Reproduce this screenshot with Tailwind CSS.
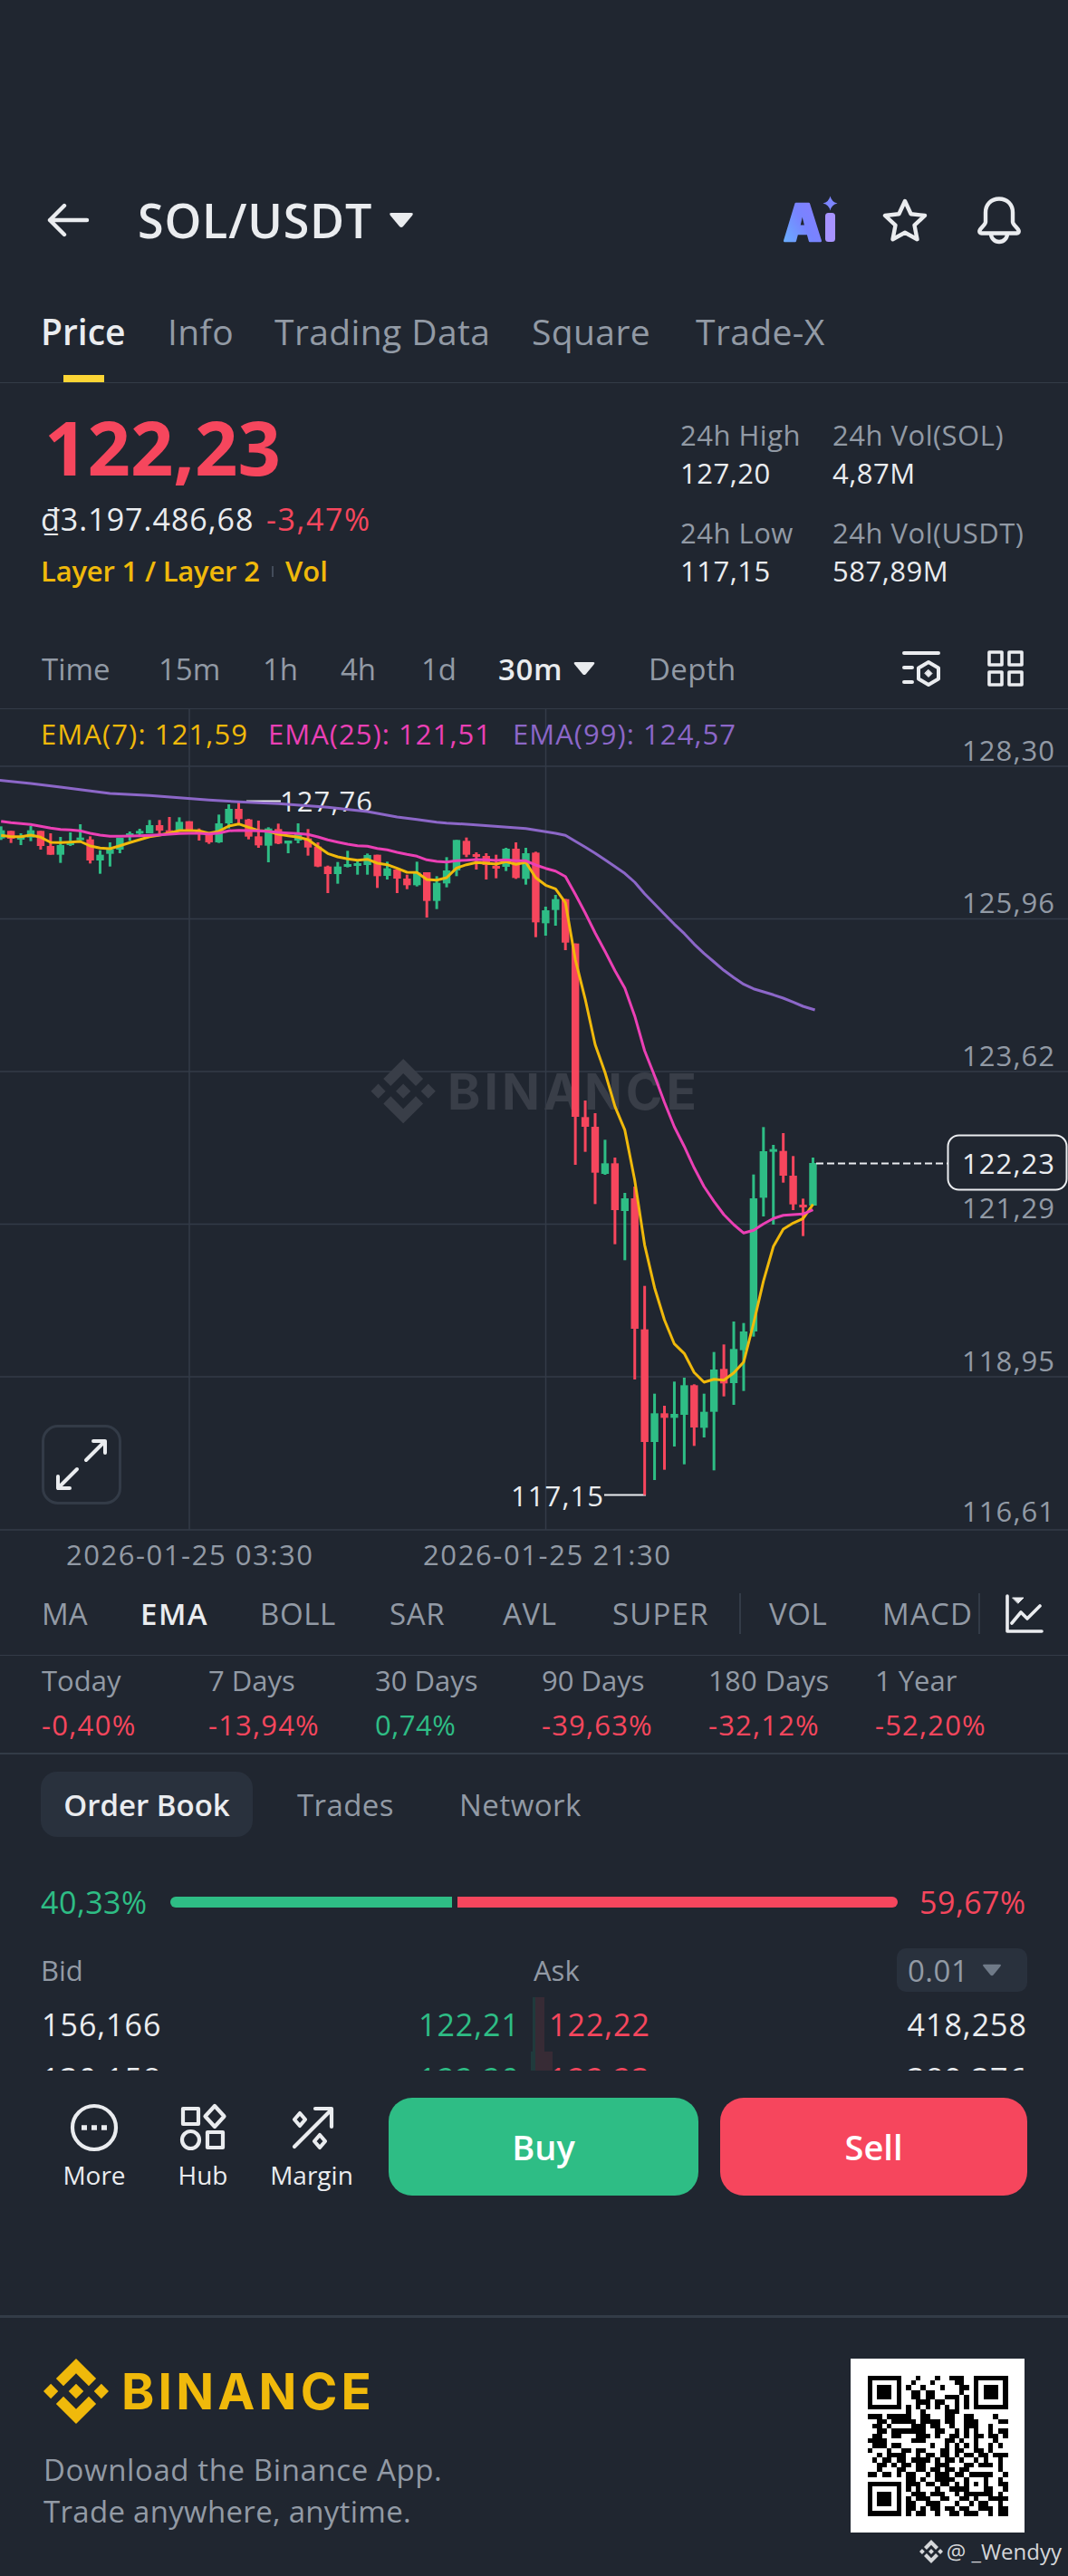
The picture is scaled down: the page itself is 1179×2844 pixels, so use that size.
<!DOCTYPE html>
<html lang="en">
<head>
    <meta charset="UTF-8">
    <meta name="viewport" content="width=device-width, initial-scale=1.0">
    <title>SOL/USDT</title>
    <script src="https://cdn.jsdelivr.net/npm/@tailwindcss/browser@4"></script>
</head>
<body class="bg-[#202630] text-[#eaecef] font-['Open_Sans','Noto_Sans',sans-serif] w-[1179px] h-[2844px] overflow-hidden whitespace-nowrap leading-none">

    <!-- Header -->
    <header class="mt-[188px] h-[110px] flex items-center pl-[51px] pr-[48px]">
        <svg class="w-[48px] h-[42px]" viewBox="0 0 48 42" fill="none" stroke="#eaecef" stroke-width="4.4" stroke-linecap="round" stroke-linejoin="round"><path d="M20 5L4 21l16 16M4 21h41"/></svg>
        <h1 class="ml-[53px] w-[277px] text-[52px] font-semibold tracking-[0.8px]">SOL/USDT</h1>
        <svg class="w-[28px] h-[18px]" viewBox="0 0 28 18" fill="#eaecef"><path d="M3 1h22q3 0 1 3L16 16q-2 2-4 0L2 4Q0 1 3 1z"/></svg>
        <svg class="ml-auto w-[64px] h-[56px] overflow-visible" viewBox="0 0 64 56">
            <defs>
                <linearGradient id="ai" x1="0" y1="1" x2="1" y2="0"><stop offset="0" stop-color="#66b8ff"/><stop offset=".5" stop-color="#7784ff"/><stop offset="1" stop-color="#8a7cff"/></linearGradient>
            </defs>
            <text x="2" y="51" font-family="Inter" font-weight="900" font-size="56" textLength="42" lengthAdjust="spacingAndGlyphs" fill="url(#ai)" stroke="url(#ai)" stroke-width="2.5" stroke-linejoin="round">A</text>
            <rect x="48" y="20" width="11" height="32" rx="3.5" fill="#a793ff"/>
            <path d="M53.500 1.500q1.500 6.500 8 8q-6.500 1.500-8 8q-1.500-6.500-8-8q6.500-1.500 8-8z" fill="#7d86ff"/>
        </svg>
        <svg class="ml-[44px] w-[56px] h-[56px]" viewBox="0 0 56 56" fill="none" stroke="#eaecef" stroke-width="4.4" stroke-linejoin="round"><path d="M28 7l6.600 14.200 15.400 1.800-11.500 10.700 3 15.500L28 41.800l-13.500 7.400 3-15.500L6 23l15.400-1.800z"/></svg>
        <svg class="ml-[48px] w-[56px] h-[56px]" viewBox="0 0 56 56" fill="none" stroke="#eaecef" stroke-width="4.400" stroke-linejoin="round"><path d="M28 4.500c-9 0-15 6.500-15 15V30c0 3-5.500 6.500-6.500 9.500-.6 2 .4 3 2 3h39c1.600 0 2.600-1 2-3C48.500 36.500 43 33 43 30V19.500c0-8.500-6-15-15-15z"/><path d="M19 43c0 5 4 9 9 9s9-4 9-9"/></svg>
    </header>

    <!-- Tabs -->
    <nav class="h-[125px] border-b border-[#333b47] flex pl-[45px] pt-[48px] text-[39px] font-medium tracking-[0.4px] text-[#929aa5]">
        <div class="w-[140px] relative text-[#eaecef] font-semibold tracking-normal">Price<span class="absolute left-[25px] top-[68px] w-[45px] h-[8px] bg-[#fcd535]"></span></div>
        <div class="w-[118px]">Info</div>
        <div class="w-[284px]">Trading Data</div>
        <div class="w-[181px]">Square</div>
        <div>Trade-X</div>
    </nav>

    <!-- Price summary -->
    <section class="h-[267px] flex justify-between pl-[45px]">
        <div class="pt-[28px]">
            <div class="pl-[4px] text-[83px] font-bold text-[#f6465d]">122,23</div>
            <div class="mt-[22px] text-[34px] font-medium tracking-[1px] flex"><span class="w-[249px]">₫3.197.486,68</span><span class="text-[#f6465d] tracking-[1.6px]">-3,47%</span></div>
            <div class="mt-[25px] text-[31px] font-semibold text-[#f0b90b] flex items-center"><span class="w-[255px] tracking-[-0.2px]">Layer 1 / Layer 2</span><span class="w-[2px] h-[12px] bg-[#434c5a] mr-[13px]"></span><span>Vol</span></div>
        </div>
        <div class="w-[428px] pt-[42px] grid grid-cols-[168px_1fr] auto-rows-min text-[31px] tracking-[0.5px]">
            <div class="h-[42px] text-[#929aa5]">24h High</div><div class="h-[42px] text-[#929aa5]">24h Vol(SOL)</div>
            <div class="h-[66px]">127,20</div><div class="h-[66px]">4,87M</div>
            <div class="h-[42px] text-[#929aa5]">24h Low</div><div class="h-[42px] text-[#929aa5]">24h Vol(USDT)</div>
            <div>117,15</div><div>587,89M</div>
        </div>
    </section>

    <!-- Intervals -->
    <nav class="h-[90px] flex items-center pl-[46px] pt-[6px] text-[33px] text-[#929aa5]">
        <div class="w-[129px]">Time</div>
        <div class="w-[115px]">15m</div>
        <div class="w-[86px]">1h</div>
        <div class="w-[89px]">4h</div>
        <div class="w-[85px]">1d</div>
        <div class="w-[82px] font-semibold text-[#eaecef] tracking-[0.6px]">30m</div>
        <svg class="w-[26px] h-[16px]" viewBox="0 0 28 18" fill="#eaecef"><path d="M3 1h22q3 0 1 3L16 16q-2 2-4 0L2 4Q0 1 3 1z"/></svg>
        <div class="ml-[58px] w-[278px] tracking-[0.4px]">Depth</div>
        <svg class="w-[46px] h-[42px]" viewBox="0 0 46 42" fill="none" stroke="#eaecef" stroke-width="4" stroke-linecap="round" stroke-linejoin="round"><path d="M4 4h38M4 20h9M4 36h9M31 14l11 6.500v12L31 39l-11-6.500v-12z"/><path d="M31 22.500l4 4-4 4-4-4z" fill="#eaecef" stroke-width="1"/></svg>
        <svg class="ml-[48px] w-[44px] h-[44px]" viewBox="0 0 44 44" fill="none" stroke="#eaecef" stroke-width="3.600" stroke-linejoin="round"><path d="M4 4h14v14H4zM26 4h14v14H26zM4 26h14v14H4zM26 26h14v14H26z"/></svg>
    </nav>

    <!-- Chart: the svg starts at the top border and shares its pixel grid with the page -->
    <section class="relative h-[964px]">
        <svg id="chart" class="absolute left-0 top-0" width="1179" height="964" viewBox="0 0 1179 964" font-family="Open Sans, Noto Sans, sans-serif" font-size="31">
            <g id="grid" stroke="#333b47"></g>
            <g fill="#393e48">
                <g transform="translate(409.500 389) scale(.5635)"><path d="M38.700 53.200 63.300 28.600 87.900 53.200 102.200 38.900 63.300 0 24.400 38.900zM0 63.300 14.300 49 28.600 63.300 14.300 77.600zM38.700 73.400 63.300 98 87.900 73.400 102.200 87.700 63.300 126.600 24.400 87.700zM98 63.300 112.300 49 126.600 63.300 112.300 77.600zM77.800 63.300 63.300 48.800 48.800 63.300 63.300 77.800z"/></g>
                <text x="494" y="444.500" font-family="Inter" font-weight="700" font-size="55" textLength="275">BINANCE</text>
            </g>
            <g fill="#eaecef"><text x="309" y="116" textLength="102">127,76</text><text x="564" y="883" textLength="102">117,15</text></g>
            <path d="M272 104.500h38M667 870.500h46" stroke="#eaecef" stroke-width="2"/>
            <g id="candles"></g>
            <g id="lines" fill="none" stroke-width="3" stroke-linejoin="round"></g>
            <path d="M901 504.500h145" stroke="#eaecef" stroke-width="2" stroke-dasharray="8 4"/>
            <text x="45" y="42" fill="#f0b90b" textLength="228">EMA(7): 121,59</text>
            <text x="296" y="42" fill="#eb40b5" textLength="246">EMA(25): 121,51</text>
            <text x="566" y="42" fill="#8c67c8" textLength="246">EMA(99): 124,57</text>
            <g id="axis" fill="#929aa5"></g>
            <rect x="1046.500" y="473.500" width="131" height="60" rx="12" fill="#202630" stroke="#eaecef" stroke-width="2"/>
            <text x="1062" y="516" fill="#eaecef" font-weight="500" textLength="102">122,23</text>
            <g fill="#929aa5"><text x="73" y="948" textLength="272">2026-01-25 03:30</text><text x="467" y="948" textLength="273">2026-01-25 21:30</text></g>
        </svg>
        <div class="absolute left-[46px] top-[793px] w-[88px] h-[88px] rounded-[18px] border-3 border-[#333b47] flex items-center justify-center">
            <svg class="w-[60px] h-[60px]" viewBox="0 0 60 60" fill="none" stroke="#eaecef" stroke-width="4" stroke-linecap="round" stroke-linejoin="round"><path d="M35 25L56 4M43 4h13v13M25 35L4 56M4 43v13h13"/></svg>
        </div>
    </section>

    <!-- Indicators -->
    <nav class="h-[84px] border-b border-[#333b47] flex items-center pl-[46px] pb-[8px] text-[33px] tracking-[0.6px] text-[#929aa5]">
        <div class="w-[109px] tracking-normal">MA</div>
        <div class="w-[132px] font-semibold text-[#eaecef] tracking-[1.5px]">EMA</div>
        <div class="w-[143px]">BOLL</div>
        <div class="w-[125px]">SAR</div>
        <div class="w-[121px]">AVL</div>
        <div class="w-[140px] tracking-[1.2px]">SUPER</div>
        <div class="w-[2px] h-[45px] bg-[#333b47]"></div>
        <div class="ml-[31px] w-[125px]">VOL</div>
        <div class="w-[106px] tracking-[1.2px]">MACD</div>
        <div class="w-[2px] h-[45px] bg-[#333b47]"></div>
        <svg class="ml-[27px] w-[44px] h-[44px]" viewBox="0 0 44 44" fill="none" stroke="#eaecef" stroke-width="3.600" stroke-linecap="round" stroke-linejoin="round"><path d="M3 2v39h38M8 32l10-12 7 7L39 13"/><path d="M9 4h12l-6 6z" fill="#eaecef" stroke-width="1"/></svg>
    </nav>

    <!-- Performance -->
    <section class="h-[109px] border-b-2 border-[#333b47] pl-[46px] pt-[12px] grid grid-cols-[184px_184px_184px_184px_184px_1fr] auto-rows-min text-[31px] text-[#929aa5]">
        <div class="h-[49px]">Today</div><div>7 Days</div><div>30 Days</div><div>90 Days</div><div class="tracking-[0.3px]">180 Days</div><div>1 Year</div>
        <div class="text-[#f6465d] tracking-[1.3px]">-0,40%</div><div class="text-[#f6465d] tracking-[1.2px]">-13,94%</div><div class="text-[#2ebd85] tracking-[0.5px]">0,74%</div><div class="text-[#f6465d] tracking-[1.2px]">-39,63%</div><div class="text-[#f6465d] tracking-[1.2px]">-32,12%</div><div class="text-[#f6465d] tracking-[1.2px]">-52,20%</div>
    </section>

    <!-- Order book -->
    <nav class="mt-[19px] h-[72px] flex items-center pl-[45px] text-[33px] font-medium text-[#929aa5]">
        <div class="w-[234px] h-[72px] rounded-[18px] bg-[#29313d] text-[#eaecef] font-semibold flex items-center justify-center">Order Book</div>
        <div class="ml-[49px] w-[179px] tracking-[0.4px]">Trades</div>
        <div class="tracking-[0.5px]">Network</div>
    </nav>
    <div class="mt-[50px] h-[44px] flex items-center pl-[45px] text-[34px] tracking-[0.5px]">
        <span class="w-[143px] text-[#2ebd85]">40,33%</span>
        <span class="w-[311px] h-[12px] rounded-l-full bg-[#2ebd85]"></span>
        <span class="ml-[6px] w-[486px] h-[12px] rounded-r-full bg-[#f6465d]"></span>
        <span class="ml-[24px] text-[#f6465d]">59,67%</span>
    </div>
    <div class="mt-[29px] h-[48px] flex items-center pl-[45px] text-[31px] text-[#929aa5]">
        <span class="w-[544px]">Bid</span><span class="w-[401px]">Ask</span>
        <span class="w-[144px] h-[48px] rounded-[10px] bg-[#29313d] flex items-center pl-[12px] text-[33px] tracking-[0.5px]">0.01
            <svg class="ml-[15px] w-[22px] h-[14px]" viewBox="0 0 28 18" fill="#6f7a88"><path d="M3 1h22q3 0 1 3L16 16q-2 2-4 0L2 4Q0 1 3 1z"/></svg>
        </span>
    </div>
    <div class="mt-[6px] h-[81px] overflow-hidden text-[34px] tracking-[1px]">
        <div class="h-[60px] flex items-center pb-[1px]">
            <span class="w-[240px] pl-[46px]">156,166</span>
            <span class="w-[334px] text-right text-[#2ebd85]">122,21</span>
            <span class="ml-[14px] w-[3px] h-[60px] bg-[#203a3c]"></span><span class="w-[10px] h-[60px] bg-[#372b35]"></span>
            <span class="ml-[5px] text-[#f6465d]">122,22</span>
            <span class="ml-auto pr-[45px]">418,258</span>
        </div>
        <div class="h-[60px] flex items-center pb-[1px]">
            <span class="w-[240px] pl-[46px]">130,158</span>
            <span class="w-[334px] text-right text-[#2ebd85]">122,20</span>
            <span class="ml-[12px] w-[5px] h-[60px] bg-[#203a3c]"></span><span class="w-[19px] h-[60px] bg-[#372b35]"></span>
            <span class="-ml-[4px] text-[#f6465d]">122,23</span>
            <span class="ml-auto pr-[45px]">389,376</span>
        </div>
    </div>

    <!-- Trade bar -->
    <section class="mt-[30px] h-[108px] flex items-center pl-[54px] text-[28px] text-center">
        <div class="w-[100px] flex flex-col items-center gap-[10px] pb-[5px]">
            <svg class="w-[56px] h-[56px]" viewBox="0 0 56 56" fill="none" stroke="#eaecef" stroke-width="4.200"><circle cx="28" cy="28" r="24"/><path d="M14 28h6M25 28h6M36 28h6" stroke-width="5.500"/></svg>
            <span>More</span>
        </div>
        <div class="ml-[20px] w-[100px] flex flex-col items-center gap-[10px] pb-[5px]">
            <svg class="w-[56px] h-[56px]" viewBox="0 0 56 56" fill="none" stroke="#eaecef" stroke-width="4.200" stroke-linejoin="round"><path d="M6 7h17v17H6zM41 4l10.500 11.500L41 27 30.500 15.500zM33 33h17v17H33z"/><circle cx="14.500" cy="41.500" r="9.500"/></svg>
            <span>Hub</span>
        </div>
        <div class="ml-[20px] w-[100px] flex flex-col items-center gap-[10px] pb-[5px]">
            <svg class="w-[56px] h-[56px]" viewBox="0 0 56 56" fill="none" stroke="#eaecef" stroke-width="4.200" stroke-linejoin="round" stroke-linecap="round"><path d="M9 49L49 9M32 7h18v20"/><path d="M15 12l6 7-6 7-6-7zM37 36l6 7-6 7-6-7z"/></svg>
            <span>Margin</span>
        </div>
        <button class="ml-[35px] w-[342px] h-[108px] rounded-[26px] bg-[#2ebd85] text-white text-[38px] font-semibold">Buy</button>
        <button class="ml-[24px] w-[339px] h-[108px] rounded-[26px] bg-[#f6465d] text-white text-[38px] font-semibold">Sell</button>
    </section>

    <!-- Share footer -->
    <footer class="relative mt-[132px] h-[288px] border-t-3 border-[#333b47] flex justify-between pl-[48px] pr-[48px] pt-[45px]">
        <div class="text-[#f0b90b]">
            <div class="h-[72px] flex items-center">
                <svg class="w-[72px] h-[72px]" viewBox="0 0 126.600 126.600" fill="#f0b90b"><path d="M38.700 53.200 63.300 28.600 87.900 53.200 102.200 38.900 63.300 0 24.400 38.900zM0 63.300 14.300 49 28.600 63.300 14.300 77.600zM38.700 73.400 63.300 98 87.900 73.400 102.200 87.700 63.300 126.600 24.400 87.700zM98 63.300 112.300 49 126.600 63.300 112.300 77.600zM77.800 63.300 63.300 48.800 48.800 63.300 63.300 77.800z"/></svg>
                <svg class="w-[296px] h-[72px]" viewBox="0 0 296 72" fill="#f0b90b"><text x="14" y="56" font-family="Inter" font-weight="700" font-size="55" textLength="276">BINANCE</text></svg>
            </div>
            <p class="mt-[28px] text-[33px] leading-[46px] text-[#929aa5] tracking-[0.6px]">Download the Binance App.<br><span class="tracking-[0.3px]">Trade anywhere, anytime.</span></p>
        </div>
        <svg id="qr" class="w-[192px] h-[192px] bg-white" viewBox="0 0 192 192" shape-rendering="crispEdges"></svg>
        <div class="absolute right-[7px] bottom-[14px] flex items-center text-[24px] text-[#d5d7da]">
            <svg class="w-[26px] h-[26px] mr-[4px]" viewBox="0 0 126.600 126.600" fill="#d5d7da"><path d="M38.700 53.200 63.300 28.600 87.900 53.200 102.200 38.900 63.300 0 24.400 38.900zM0 63.300 14.300 49 28.600 63.300 14.300 77.600zM38.700 73.400 63.300 98 87.900 73.400 102.200 87.700 63.300 126.600 24.400 87.700zM98 63.300 112.300 49 126.600 63.300 112.300 77.600zM77.800 63.300 63.300 48.800 48.800 63.300 63.300 77.800z"/></svg>
            @ _Wendyy
        </div>
    </footer>

    <script>
        const STEP = 10.93, X0 = 1.2;
        const x = i => X0 + i * STEP;

        // g = up, r = down; high, body top, body bottom, low (in thirds of a pixel)
        const candles = `g397,410,437,442 r412,412,438,452 g420,432,440,459 g396,410,434,446 r412,412,462,474 r420,462,491,491 g432,459,491,518 g417,450,459,462 g390,434,443,443 r430,440,510,520
            g476,491,510,554 g450,474,488,530 g435,435,474,486 g414,420,428,445 g405,412,420,430 g376,393,420,420 r376,393,411,422 r366,410,420,424 g367,382,410,415 r380,380,410,412
            r404,412,418,444 r416,420,450,455 g358,387,450,452 g324,339,387,404 r318,339,373,392 r372,374,431,440 r378,430,460,468 g400,404,461,516 r388,406,454,456 g444,444,454,486
            g387,420,444,453 r406,437,467,494 r450,464,530,532 r527,530,555,618 g515,530,555,587 g478,522,531,533 g510,519,528,557 g487,492,525,557 r491,491,562,601 g514,536,561,573
            r540,540,570,618 r557,570,592,605 g514,550,592,596 r549,549,644,699 g562,584,644,671 g499,543,586,599 g442,442,543,562 r434,445,491,499 r483,489,498,540 r486,495,525,573
            r491,528,537,569 g468,471,531,545 r450,471,568,571 g468,486,571,590 r481,484,715,764 g663,675,718,759 g624,638,674,726 r637,638,782,807 r785,785,1359,1518 r1305,1360,1392,1475
            r1347,1392,1544,1648 g1435,1513,1548,1551 r1494,1513,1668,1781 g1611,1629,1671,1834 r1590,1629,2061,2229 r1919,2063,2436,2612 g2276,2341,2436,2562 r2316,2341,2356,2528 g2236,2343,2356,2451 g2223,2248,2346,2510
            r2245,2248,2388,2449 g2276,2336,2389,2421 g2138,2196,2336,2530 r2113,2194,2242,2285 g2037,2128,2241,2313 g2042,2070,2132,2267 g1550,1629,2070,2087 g1393,1473,1627,1689 g1452,1466,1474,1716 r1413,1472,1554,1577
            r1489,1554,1649,1668 r1630,1650,1659,1754 g1494,1512,1653,1653`.split(/\s+/);

        document.getElementById('candles').innerHTML = candles.map((c, i) => {
            const color = c[0] === 'g' ? '#2ebd85' : '#f6465d';
            const [h, t, b, l] = c.slice(1).split(',').map(v => v / 3);
            return `<rect x="${x(i) - 1.5}" y="${h}" width="3" height="${l - h}" fill="${color}"/><rect x="${x(i) - 4.2}" y="${t}" width="8.4" height="${Math.max(b - t, 3)}" fill="${color}"/>`;
        }).join('');

        // EMA lines, same units
        const ema7 = [427,431,431,426,433,450,451,449,447,462,469,471,461,451,441,431,426,419,411,411,412,420,413,396,389,400,411,413,423,428,433,441,464,487,498,505,509,506,519,524,536,549,550,573,575,567,535,524,517,519,522,514,523,516,567,592,604,650,838,970,1120,1212,1325,1403,1569,1783,1925,2032,2111,2143,2206,2238,2228,2231,2207,2171,2043,1903,1789,1731,1711,1696,1649];
        const ema25 = [380,385,388,391,397,403,407,409,412,420,426,430,430,429,428,427,425,423,421,420,420,422,419,412,410,411,412,414,417,419,421,424,432,442,449,456,461,463,470,475,483,490,496,508,513,515,511,509,507,508,510,508,511,511,525,536,545,563,622,684,750,811,875,933,1025,1140,1223,1311,1392,1457,1528,1590,1639,1683,1716,1744,1735,1714,1696,1685,1683,1681,1667];
        const ema99 = [[-0.2,244],[3,255],[6,267],[11,288],[15,295],[21,310],[24,316],[28,322],[33,334],[37,348],[40,366],[42,374],[44,383],[45,386],[48,392],[53,404],[55,415],[56,420],[57,427],[58,446],[59,466],[60,486],[61,508],[62,530],[63,553],[64,582],[65,620],[66,654],[67,688],[68,721],[69,752],[70,787],[71,818],[72,846],[73,874],[74,898],[75,920],[76,935],[77,945],[78,955],[79,966],[80,979],[81,993],[82.2,1005]];
        const line = (pts, color) => `<polyline stroke="${color}" points="${pts.map(([i, v]) => x(i).toFixed(1) + ',' + (v / 3).toFixed(1)).join(' ')}"/>`;
        document.getElementById('lines').innerHTML =
            line(ema99, '#8c67c8') +
            line(ema7.map((v, i) => [i, v]), '#f0b90b') +
            line(ema25.map((v, i) => [i, v]), '#eb40b5');

        // Grid and price axis
        const rows = [[66, '128,30', 60], [234.5, '125,96', 228], [403, '123,62', 397], [571.5, '121,29', 565], [740, '118,95', 734], [909, '116,61', 900]];
        document.getElementById('grid').innerHTML =
            '<path d="M0 2.500h1179"/>' +
            '<path d="M209 3v906M602.500 3v906" stroke-width="1.500"/>' +
            rows.map(([y]) => `<path d="M0 ${y}h1179" stroke-width="1.500"/>`).join('');
        document.getElementById('axis').innerHTML = rows.map(([, t, y]) => `<text x="1062" y="${y}" textLength="102">${t}</text>`).join('');

        // QR code
        const qr = [
            '11111110001000100111001111111', '10000010010001000011001000001', '10111010100100010001101011101',
            '10111010011011000001001011101', '10111010011011001110101011101', '10000010001110110010101000001',
            '11111110101010101010101111111', '00000000100100001110000000000', '11101111100110001100110000100',
            '00110111110111101100111000011', '01101000011101100100111001000', '00110111111100110010101001011',
            '01100110001110100110101101101', '11110000011100001101001000100', '01110110000001001010101001010',
            '10001001101100011011001101000', '00101111001011011010110110111', '01011011011110101101001010010',
            '00110101101100111000110111010', '00100011001101101101100000010', '11011010110010111011011111001',
            '00000000110100111100100010010', '11111110111011011010101010011', '10000010101000100111100011001',
            '10111010011101110010111111010', '10111010101110011001101001111', '10111010110011100010010110010',
            '10000010110101101101100111011', '11111110101100100110111001011'
        ];
        const m = 155 / 29;
        document.getElementById('qr').innerHTML = qr.map((row, r) => [...row].map((v, c) =>
            v === '1' ? `<rect x="${18.5 + c * m}" y="${18.5 + r * m}" width="${m}" height="${m}"/>` : '').join('')).join('');
    </script>
</body>
</html>
